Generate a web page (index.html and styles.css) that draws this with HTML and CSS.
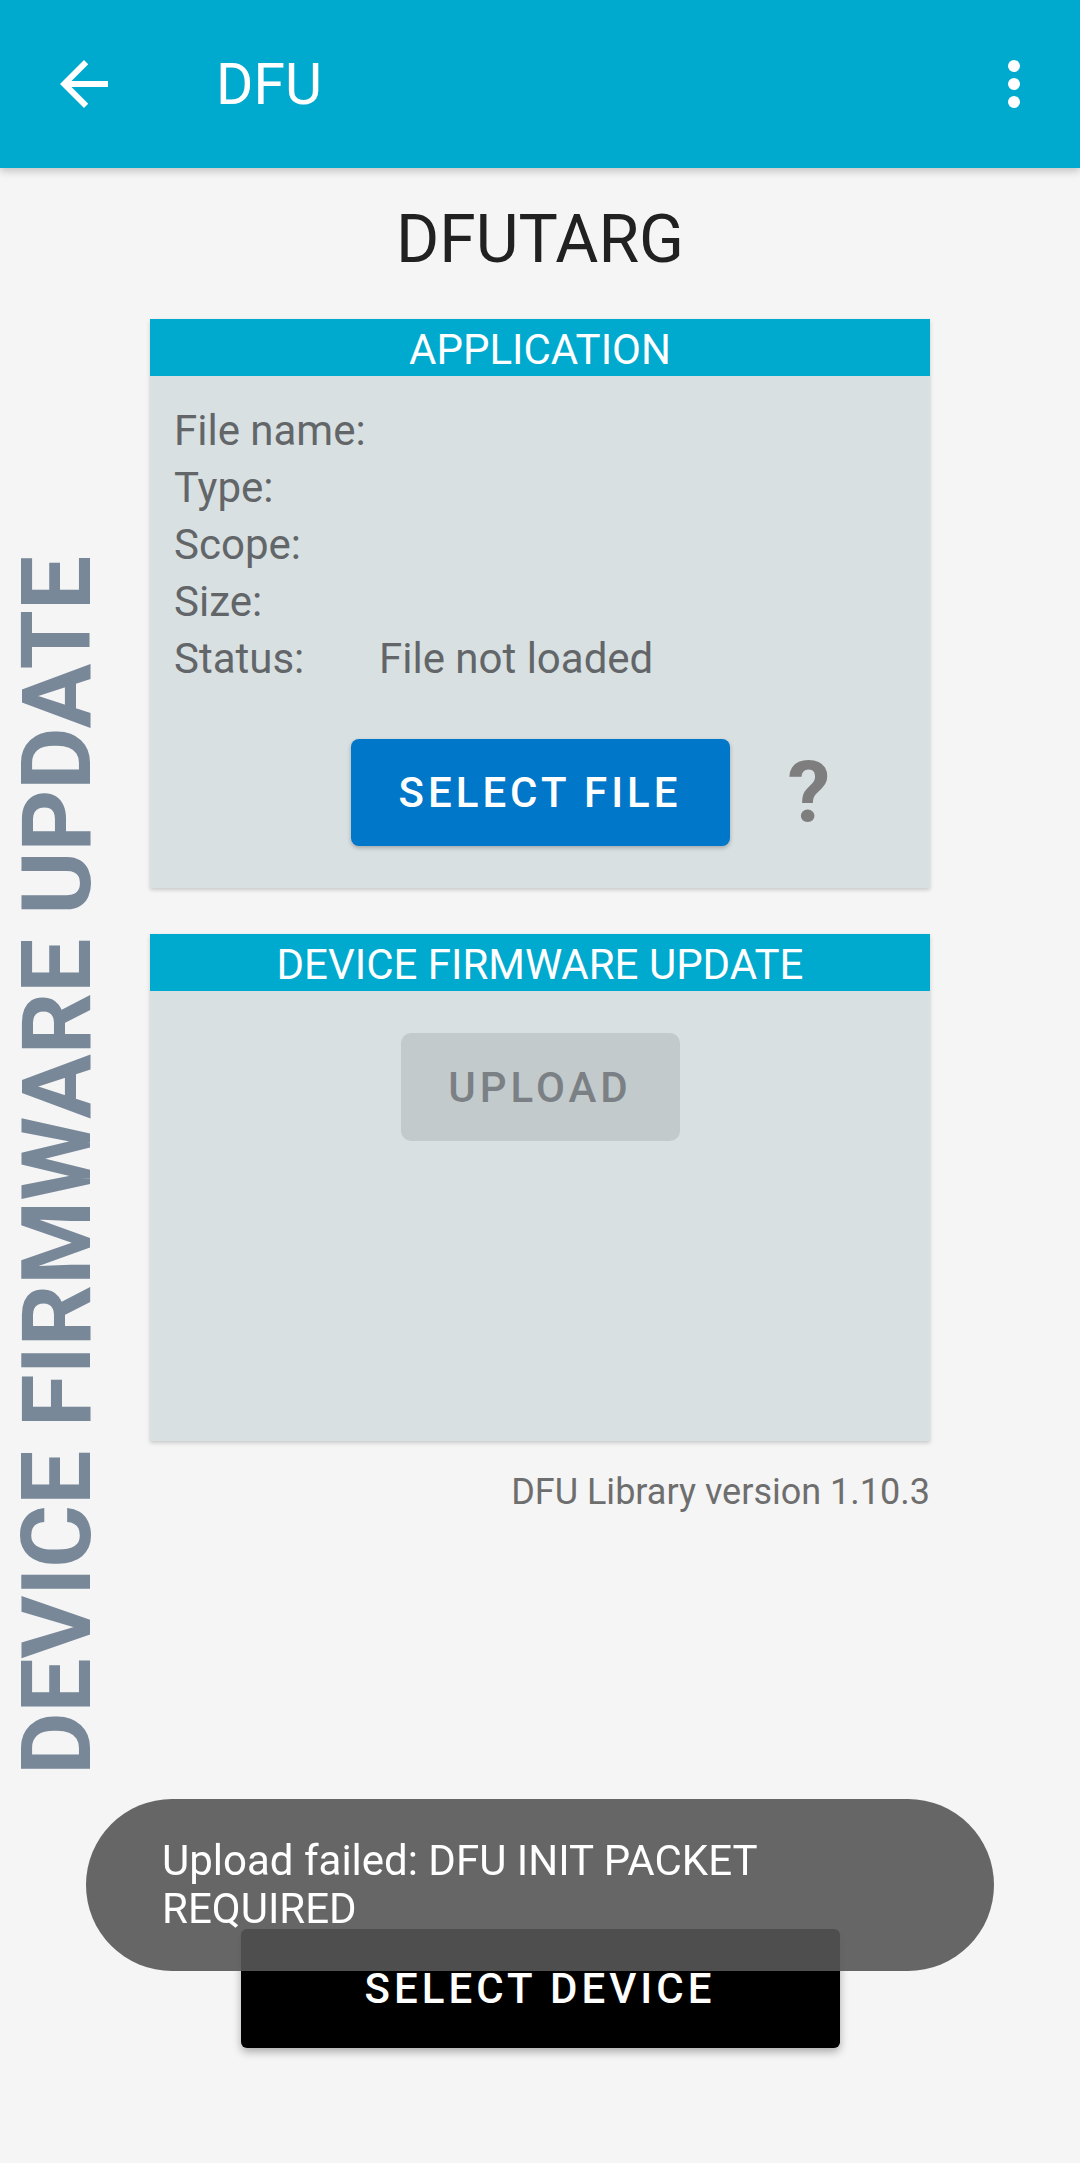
FILE: index.html
```html
<!DOCTYPE html>
<html>
<head>
<meta charset="utf-8">
<title>DFU</title>
<link rel="stylesheet" href="styles.css">
</head>
<body>
<div class="toolbar">
	<span class="back">
		<svg viewBox="0 0 24 24" width="72" height="72"><path d="M20 11H7.83l5.59-5.59L12 4l-8 8 8 8 1.41-1.41L7.83 13H20v-2z"/></svg>
	</span>
	<span class="bar-title">DFU</span>
	<span class="more">
		<svg viewBox="0 0 24 24" width="72" height="72"><circle cx="12" cy="6" r="2"/><circle cx="12" cy="12" r="2"/><circle cx="12" cy="18" r="2"/></svg>
	</span>
</div>

<div class="page">
	<div class="side">DEVICE FIRMWARE UPDATE</div>
	<div class="main">
		<h1 class="dev-name">DFUTARG</h1>

		<div class="card">
			<div class="card-head">APPLICATION</div>
			<div class="card-body">
				<div class="info">
					<span>File name:</span><span></span>
					<span>Type:</span><span></span>
					<span>Scope:</span><span></span>
					<span>Size:</span><span></span>
					<span>Status:</span><span>File not loaded</span>
				</div>
				<div class="file-row">
					<span></span>
					<button class="btn btn-blue">SELECT FILE</button>
					<span class="help">?</span>
				</div>
			</div>
		</div>

		<div class="card card-dfu">
			<div class="card-head">DEVICE FIRMWARE UPDATE</div>
			<div class="card-body dfu-body">
				<button class="btn btn-off">UPLOAD</button>
			</div>
		</div>

		<div class="version">DFU Library version 1.10.3</div>
	</div>
</div>

<div class="footer">
	<button class="btn btn-black">SELECT DEVICE</button>
</div>

<div class="toast">Upload failed: DFU INIT PACKET REQUIRED</div>
</body>
</html>
```

FILE: styles.css
```css
*{box-sizing:border-box;}
html,body{margin:0;padding:0;}
body{min-height:100vh;display:flex;flex-direction:column;background:#F5F5F5;font-family:Roboto,'Liberation Sans',sans-serif;color:#212121;}

.toolbar{height:168px;flex-shrink:0;display:flex;align-items:center;background:#00A9CE;color:#FFF;box-shadow:0 3px 8px rgba(0,0,0,.22);position:relative;z-index:1;}
.toolbar svg{display:block;fill:#FFF;}
.back{margin-left:48px;}
.bar-title{margin-left:96px;font-size:57px;}
.more{margin-left:auto;margin-right:30px;}

.page{display:grid;grid-template-columns:150px 780px 150px;}
.side{grid-column:1;justify-self:start;align-self:start;margin:388px 0 0 9px;writing-mode:vertical-rl;transform:rotate(180deg);font-size:96px;font-weight:bold;line-height:1;color:#788898;white-space:nowrap;}
.main{grid-column:2;grid-row:1;}

.dev-name{margin:33px 0 0;font-size:66px;line-height:78px;font-weight:normal;text-align:center;color:#212121;}

.card{margin-top:40px;background:#D9E0E2;box-shadow:0 2px 4px rgba(0,0,0,.18);}
.card-head{height:57px;line-height:61px;overflow:hidden;background:#00A9CE;color:#FFF;font-size:42px;text-align:center;}
.card-body{padding:26px 0 42px;}
.info{display:grid;grid-template-columns:205px 1fr;padding-left:24px;font-size:42px;line-height:57px;color:#626669;}
.file-row{display:grid;grid-template-columns:1fr auto 1fr;align-items:center;margin-top:52px;}
.help{margin-left:58px;font-size:86px;font-weight:bold;line-height:1;color:#7E7E7E;}

.btn{border:0;font-family:inherit;font-size:42px;font-weight:500;letter-spacing:4px;padding:0;display:flex;align-items:center;justify-content:center;}
.btn-blue{width:379px;height:107px;border-radius:8px;background:#0077C8;color:#FFF;box-shadow:0 2px 4px rgba(0,0,0,.25);}

.card-dfu{margin-top:46px;}
.dfu-body{height:450px;padding:42px 0 0;display:flex;justify-content:center;align-items:flex-start;}
.btn-off{width:279px;height:108px;border-radius:10px;background:#C3CACC;color:#7B8084;}

.version{margin-top:30px;font-size:36px;line-height:42px;text-align:right;color:#6E6E6E;}

.footer{margin-top:auto;margin-bottom:115px;display:flex;justify-content:center;}
.btn-black{width:599px;height:119px;border-radius:6px;background:#000;color:#FFF;box-shadow:0 4px 8px rgba(0,0,0,.3);}

.toast{position:fixed;left:86px;right:86px;top:1799px;height:172px;border-radius:86px;padding:0 76px;display:flex;align-items:center;background:rgba(86,86,86,.9);color:#FFF;font-size:42px;line-height:48px;}
```
